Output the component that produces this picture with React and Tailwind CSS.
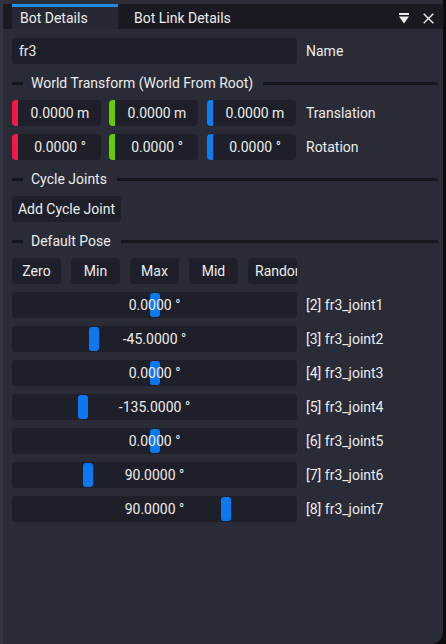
import React from 'react'

const font = { fontFamily: 'Roboto, "Noto Sans", sans-serif' }

function SeparatorText({ children, className = '' }) {
  return (
    <div className={`flex items-center h-[22px] ${className}`}>
      <div className="w-[11px] h-[3px] bg-[#17181e]" />
      <span className="ml-[8px] mr-[10px] text-[14px] leading-none text-[#ececec] whitespace-nowrap">{children}</span>
      <div className="flex-1 h-[3px] bg-[#17181e] mr-[5px]" />
    </div>
  )
}

function AxisInput({ color, value }) {
  return (
    <div className="flex w-[89px] h-[26px]">
      <div className={`w-[6px] h-full rounded-l-[4px] ${color}`} />
      <div className="flex-1 h-full bg-[#1e1f28] rounded-r-[4px] flex items-center justify-center text-[14px] text-[#ececec] pl-[1px]">
        {value}
      </div>
    </div>
  )
}

function Btn({ children, className = '' }) {
  return (
    <div className={`h-[26px] bg-[#1e1f28] rounded-[4px] flex items-center justify-center text-[14px] text-[#ececec] overflow-hidden whitespace-nowrap ${className}`}>
      {children}
    </div>
  )
}

const joints = [
  { label: '[2] fr3_joint1', value: '0.0000 °', grab: 138 },
  { label: '[3] fr3_joint2', value: '-45.0000 °', grab: 77 },
  { label: '[4] fr3_joint3', value: '0.0000 °', grab: 138 },
  { label: '[5] fr3_joint4', value: '-135.0000 °', grab: 66 },
  { label: '[6] fr3_joint5', value: '0.0000 °', grab: 138 },
  { label: '[7] fr3_joint6', value: '90.0000 °', grab: 71 },
  { label: '[8] fr3_joint7', value: '90.0000 °', grab: 209 },
]

function JointSlider({ joint }) {
  return (
    <div className="flex items-center mt-[8px]">
      <div className="relative w-[285px] h-[26px] bg-[#1e1f28] rounded-[4px]">
        <div
          className="absolute top-[1px] w-[10px] h-[24px] bg-[#0a78f0] rounded-[3px]"
          style={{ left: joint.grab }}
        />
        <div className="absolute inset-0 flex items-center justify-center text-[14px] text-[#ececec]">
          {joint.value}
        </div>
      </div>
      <span className="ml-[9px] text-[14px] text-[#ececec]">{joint.label}</span>
    </div>
  )
}

export default function App() {
  return (
    <div className="w-[446px] h-[644px] bg-[#0c0c10] overflow-hidden" style={font}>
      <div className="w-[443px] h-[644px] bg-[#292b36] rounded-br-[12px] flex flex-col border-l-[3px] border-[#31333f] relative">
        {/* top strip */}
        <div className="h-[4px] bg-[#2c2e39]" />
        {/* Tab bar */}
        <div className="h-[25px] bg-[#1a1b22] flex items-stretch">
          <div className="ml-[9px] w-[106px] bg-[#262833] flex flex-col">
            <div className="h-[3px] bg-[#1e8ce8]" />
            <div className="flex-1 flex items-center pl-[8px] text-[14px] text-[#ececec]">Bot Details</div>
          </div>
          <div className="flex items-center pl-[16px] pt-[3px] text-[14px] text-[#ececec]">Bot Link Details</div>
          <div className="flex-1" />
          <div className="flex items-center gap-[14px] pr-[9px] pt-[3px]">
            <svg width="10" height="11" viewBox="0 0 10 11">
              <rect x="0" y="0" width="10" height="2" fill="#ececec" />
              <polygon points="0,3.5 10,3.5 5,10.5" fill="#ececec" />
            </svg>
            <svg width="11" height="11" viewBox="0 0 11 11">
              <path d="M0.7 0.7 L10.3 10.3 M10.3 0.7 L0.7 10.3" stroke="#ececec" strokeWidth="1.4" />
            </svg>
          </div>
        </div>

        <div className="flex flex-col pl-[9px]">
          {/* Name */}
          <div className="flex items-center mt-[9px]">
            <div className="w-[285px] h-[26px] bg-[#1e1f28] rounded-[4px] flex items-center pl-[7px] text-[14px] text-[#ececec]">fr3</div>
            <span className="ml-[9px] text-[14px] text-[#ececec]">Name</span>
          </div>

          <SeparatorText className="mt-[8px]">World Transform (World From Root)</SeparatorText>

          <div className="flex items-center mt-[6px]">
            <AxisInput color="bg-[#f2184b]" value="0.0000 m" />
            <div className="w-[8px]" />
            <AxisInput color="bg-[#66cc00]" value="0.0000 m" />
            <div className="w-[9px]" />
            <AxisInput color="bg-[#0a80f5]" value="0.0000 m" />
            <span className="ml-[10px] text-[14px] text-[#ececec]">Translation</span>
          </div>
          <div className="flex items-center mt-[8px]">
            <AxisInput color="bg-[#f2184b]" value="0.0000 °" />
            <div className="w-[8px]" />
            <AxisInput color="bg-[#66cc00]" value="0.0000 °" />
            <div className="w-[9px]" />
            <AxisInput color="bg-[#0a80f5]" value="0.0000 °" />
            <span className="ml-[10px] text-[14px] text-[#ececec]">Rotation</span>
          </div>

          <SeparatorText className="mt-[8px]">Cycle Joints</SeparatorText>

          <Btn className="mt-[6px] w-[109px]">Add Cycle Joint</Btn>

          <SeparatorText className="mt-[8px]">Default Pose</SeparatorText>

          <div className="flex mt-[6px] gap-[10px]">
            <Btn className="w-[49px]">Zero</Btn>
            <Btn className="w-[49px]">Min</Btn>
            <Btn className="w-[49px]">Max</Btn>
            <Btn className="w-[49px]">Mid</Btn>
            <Btn className="w-[49px] !justify-start pl-[7px]">Random</Btn>
          </div>

          {joints.map((j) => (
            <JointSlider key={j.label} joint={j} />
          ))}
        </div>
      </div>
    </div>
  )
}
